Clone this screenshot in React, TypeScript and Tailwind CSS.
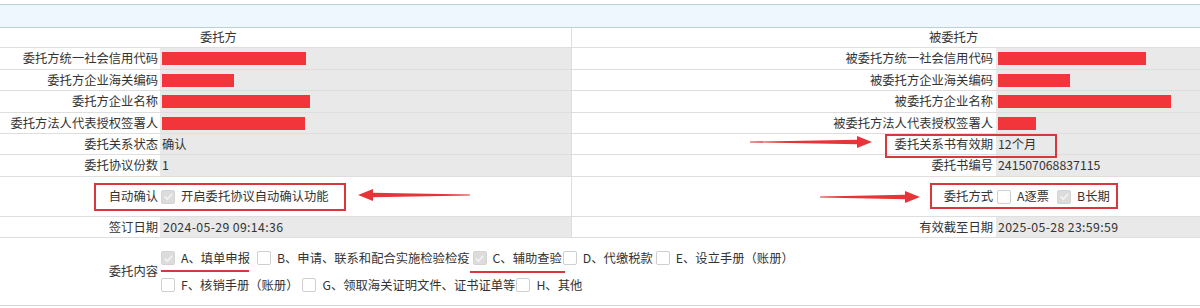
import React from 'react';

const font = { fontFamily: '"Microsoft YaHei", "Noto Sans CJK SC", "Noto Sans", sans-serif' };

const Box: React.FC<{ checked?: boolean }> = ({ checked }) => (
  <span
    className={`inline-flex h-[14px] w-[14px] shrink-0 items-center justify-center rounded-[2px] border ${
      checked ? 'border-[#d4d4d4] bg-[#dcdcdc]' : 'border-[#cfcfcf] bg-white'
    }`}
  >
    {checked && (
      <svg width="11" height="11" viewBox="0 0 12 12">
        <path d="M2 6.2 L4.8 9 L10 3" fill="none" stroke="#f4f4f4" strokeWidth="1.8" />
      </svg>
    )}
  </span>
);

const Redact: React.FC<{ w: number }> = ({ w }) => (
  <span className="inline-block h-[13px] bg-[#f2353a]" style={{ width: w }} />
);

const Arrow: React.FC<{ x1: number; x2: number; y: number }> = ({ x1, x2, y }) => {
  // x2 is the tip
  const dir = x2 > x1 ? 1 : -1;
  const left = Math.min(x1, x2);
  const w = Math.abs(x2 - x1);
  const tip = dir === 1 ? w : 0;
  const base = tip - dir * 15;
  const tail = dir === 1 ? 0 : w;
  return (
    <svg className="pointer-events-none absolute" style={{ left, top: y - 8, width: w, height: 16 }}>
      <polygon points={`${tail},7.6 ${tail},8.4 ${base},10.2 ${base},14 ${tip},8 ${base},2 ${base},5.8`} fill="#e63538" />
    </svg>
  );
};

type Row = { l: string; lv?: React.ReactNode; r: string; rv?: React.ReactNode };

const rows: (Row & { h: number })[] = [
  { l: '委托方统一社会信用代码', lv: <Redact w={144} />, r: '被委托方统一社会信用代码', rv: <Redact w={148} />, h: 22 },
  { l: '委托方企业海关编码', lv: <Redact w={72} />, r: '被委托方企业海关编码', rv: <Redact w={72} />, h: 21 },
  { l: '委托方企业名称', lv: <Redact w={148} />, r: '被委托方企业名称', rv: <Redact w={173} />, h: 22 },
  { l: '委托方法人代表授权签署人', lv: <Redact w={143} />, r: '被委托方法人代表授权签署人', rv: <Redact w={38} />, h: 21 },
  { l: '委托关系状态', lv: '确认', r: '委托关系书有效期', rv: '12个月', h: 21 },
  { l: '委托协议份数', lv: '1', r: '委托书编号', rv: '241507068837115', h: 22 },
];

const Item: React.FC<{ checked?: boolean; children: React.ReactNode; className?: string }> = ({ checked, children, className }) => (
  <span className={`flex items-center gap-[6px] ${className || ''}`}>
    <Box checked={checked} />
    <span>{children}</span>
  </span>
);

export default function App() {
  return (
    <div className="relative h-[308px] w-[1200px] overflow-hidden bg-white text-[12.3px] leading-none text-[#333]" style={font}>
      <div className="h-[4px]" />
      <div className="h-[24px] border-y border-[#b9d0da] bg-[#eef7fd]" />

      <div className="grid grid-cols-[160px_411px_425px_1fr]">
        {/* header */}
        <div className="col-span-2 flex h-[20px] items-center border-b border-[#dedede] pl-[200px]">委托方</div>
        <div className="col-span-2 flex h-[20px] items-center border-b border-l border-[#dedede] pl-[357px]">被委托方</div>

        {rows.map((r) => (
          <React.Fragment key={r.l}>
            <div className="flex items-center justify-end border-b border-[#dedede] pr-[2px]" style={{ height: r.h }}>
              {r.l}
            </div>
            <div className="flex items-center border-b border-[#dedede] bg-[#e9e9e9] pl-[2px]">{r.lv}</div>
            <div className="flex items-center justify-end border-b border-l border-[#dedede] pr-[3px]">{r.r}</div>
            <div className="flex items-center border-b border-[#dedede] bg-[#e9e9e9] pl-[2px]">{r.rv}</div>
          </React.Fragment>
        ))}

        {/* 自动确认 */}
        <div className="flex h-[40px] items-center justify-end border-b border-[#dedede] pr-[2px]">自动确认</div>
        <div className="flex items-center gap-[6px] border-b border-[#dedede] pl-[1px]">
          <Box checked />
          <span>开启委托协议自动确认功能</span>
        </div>
        <div className="flex items-center justify-end border-b border-l border-[#dedede] pr-[3px]">委托方式</div>
        <div className="flex items-center border-b border-[#dedede] pl-[1px]">
          <Item className="mr-[8px]">A逐票</Item>
          <Item checked>B长期</Item>
        </div>

        {/* 签订日期 */}
        <div className="flex h-[21px] items-center justify-end border-b border-[#dedede] pr-[2px]">签订日期</div>
        <div className="flex items-center border-b border-[#dedede] bg-[#e9e9e9] pl-[3px] tracking-[0.35px]">2024-05-29 09:14:36</div>
        <div className="flex items-center justify-end border-b border-l border-[#dedede] pr-[3px]">有效截至日期</div>
        <div className="flex items-center border-b border-[#dedede] bg-[#e9e9e9] pl-[2px] tracking-[0.35px]">2025-05-28 23:59:59</div>

        {/* 委托内容 */}
        <div className="flex h-[68px] items-center justify-end border-b border-[#d4d4d4] pr-[2px]">委托内容</div>
        <div className="col-span-3 flex flex-col justify-center gap-[13px] border-b border-[#d4d4d4] pl-[1px]">
          <div className="flex items-center">
            <Item checked className="mr-[7px]">A、填单申报</Item>
            <Item className="mr-[3px]">B、申请、联系和配合实施检验检疫</Item>
            <Item checked className="mr-[1px]">C、辅助查验</Item>
            <Item className="mr-[3px]">D、代缴税款</Item>
            <Item>E、设立手册（账册）</Item>
          </div>
          <div className="flex items-center">
            <Item className="mr-[4px]">F、核销手册（账册）</Item>
            <Item className="mr-[1px]">G、领取海关证明文件、证书证单等</Item>
            <Item>H、其他</Item>
          </div>
        </div>
      </div>

      {/* annotations */}
      <div className="pointer-events-none absolute left-[885px] top-[134px] h-[24px] w-[172px] border-2 border-[#d8383c]" />
      <div className="pointer-events-none absolute left-[94px] top-[183px] h-[28px] w-[252px] border-2 border-[#d8383c]" />
      <div className="pointer-events-none absolute left-[930px] top-[183px] h-[26px] w-[188px] border-2 border-[#d8383c]" />
      <div className="pointer-events-none absolute left-[161px] top-[270px] h-[2px] w-[88px] bg-[#d8383c]" />
      <div className="pointer-events-none absolute left-[470px] top-[271px] h-[2px] w-[95px] bg-[#d8383c]" />
      <Arrow x1={750} x2={872} y={142} />
      <Arrow x1={470} x2={358} y={195} />
      <Arrow x1={820} x2={920} y={197} />
    </div>
  );
}
